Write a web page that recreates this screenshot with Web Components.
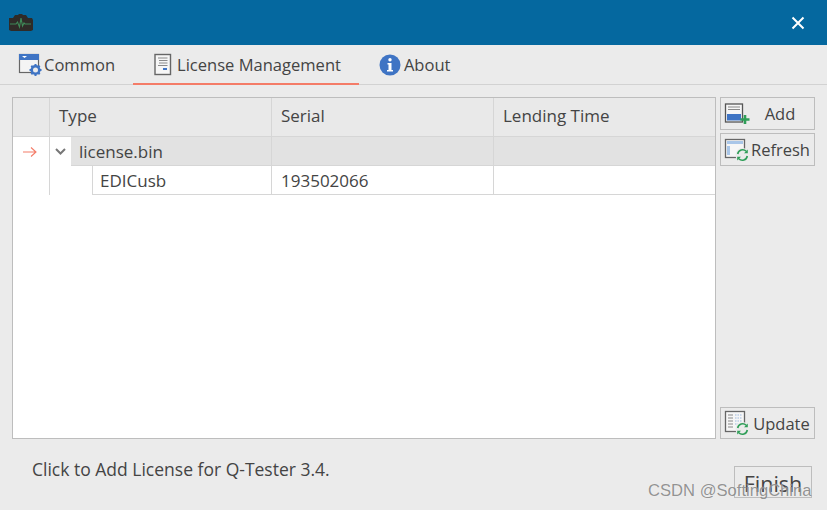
<!DOCTYPE html>
<html>
<head>
<meta charset="utf-8">
<style>
  html, body { margin: 0; height: 100%; }
  body { font-family: "Open Sans", "Noto Sans", sans-serif; color: #444; background: #ebebeb; overflow: hidden; }
</style>
</head>
<body>
<license-window>
  <title-bar slot="title"></title-bar>
  <tab-strip slot="tabs">
    <tab-item style="padding-left:18px">
      <svg slot="icon" width="26" height="24" viewBox="0 0 26 24">
        <rect x="1.500" y="1.500" width="19" height="18" fill="#f4f4f4" stroke="#666" stroke-width="1.200"/>
        <rect x="1" y="1" width="20" height="6" fill="#3f74c4"/>
        <path d="M4 3h5l-2.500 2z" fill="#fff"/>
        <circle cx="17.500" cy="17" r="3.800" fill="#ebebeb" stroke="#3f74c4" stroke-width="2.600"/>
        <path d="M17.500 11v2M17.500 21v2M11.500 17h2M21.500 17h2M13.300 12.800l1.400 1.400M20.300 19.800l1.400 1.400M21.700 12.800l-1.400 1.400M14.700 19.800l-1.400 1.400" stroke="#3f74c4" stroke-width="2"/>
      </svg>
      Common
    </tab-item>
    <tab-item active>
      <svg slot="icon" style="margin-right:4px" width="20" height="24" viewBox="0 0 20 24">
        <rect x="2" y="1.500" width="15.500" height="20" fill="#f6f6f6" stroke="#666" stroke-width="1.400"/>
        <path d="M5 5h9.500M6 7.500h8.500M6 10h8.500M5 12.500h9.500" stroke="#8a8a8a" stroke-width="1"/>
        <rect x="10" y="15" width="4" height="2" fill="#3f74c4"/>
      </svg>
      License Management
    </tab-item>
    <tab-item>
      <svg slot="icon" style="margin-right:3px" width="22" height="22" viewBox="0 0 22 22">
        <circle cx="11" cy="11" r="10.500" fill="#3f74c4"/>
        <circle cx="11" cy="5.800" r="1.700" fill="#fff"/>
        <path d="M8.500 9h4v7h1.500v1.500H8V16h1.500v-5.500h-1z" fill="#fff"/>
      </svg>
      About
    </tab-item>
  </tab-strip>
  <license-grid slot="grid"></license-grid>
  <side-button slot="side" label="Add" wide>
    <svg slot="icon" width="26" height="22" viewBox="0 0 26 22">
      <rect x="1.500" y="1" width="17" height="18" fill="#f6f6f6" stroke="#555" stroke-width="1.300"/>
      <path d="M4 4h12M4 6.500h12" stroke="#888"/>
      <rect x="3" y="11" width="14" height="6.500" fill="#3f74c4"/>
      <path d="M21 12v9M16.500 16.500h9" stroke="#2f9e58" stroke-width="2.600"/>
    </svg>
  </side-button>
  <side-button slot="side" label="Refresh">
    <svg slot="icon" width="26" height="24" viewBox="0 0 26 24">
      <rect x="1.500" y="1.500" width="19" height="18" fill="#f6f6f6" stroke="#666" stroke-width="1.300"/>
      <rect x="3" y="3" width="16" height="3" fill="#a9c6e8"/>
      <rect x="3" y="8" width="3" height="9" fill="#a9c6e8"/>
      <circle cx="18.500" cy="17" r="7" fill="#ebebeb"/>
      <path d="M13.700 16a5 5 0 0 1 8.500-2.700M23.300 18a5 5 0 0 1-8.500 2.700" fill="none" stroke="#2f9e58" stroke-width="1.600"/>
      <path d="M23.800 11.500v3.800H20zM13.200 22.500v-3.800H17z" fill="#2f9e58"/>
    </svg>
  </side-button>
  <side-button slot="update" label="Update" update>
    <svg slot="icon" width="26" height="26" viewBox="0 0 26 26">
      <rect x="1.500" y="1.500" width="19" height="20" fill="#f6f6f6" stroke="#666" stroke-width="1.300"/>
      <path d="M4 5h5M4 8h5M4 11h5M4 14h5M4 17h5" stroke="#888" stroke-width="1.200"/>
      <path d="M11 5h7M11 8h7M11 11h7M11 14h3" stroke="#9db9de" stroke-width="1.200" stroke-dasharray="1.500 1"/>
      <circle cx="18.500" cy="19" r="7" fill="#ebebeb"/>
      <path d="M13.700 18a5 5 0 0 1 8.500-2.700M23.300 20a5 5 0 0 1-8.500 2.700" fill="none" stroke="#2f9e58" stroke-width="1.600"/>
      <path d="M23.800 13.500v3.800H20zM13.200 24.500v-3.800H17z" fill="#2f9e58"/>
    </svg>
  </side-button>
  <span slot="hint">Click to Add License for Q-Tester 3.4.</span>
  <finish-button slot="finish">Finish</finish-button>
</license-window>

<script>
class LicenseWindow extends HTMLElement {
  constructor() {
    super();
    this.attachShadow({mode: 'open'}).innerHTML = `
      <style>
        :host { display: flex; flex-direction: column; width: 827px; height: 510px; position: relative; overflow: hidden; }
        .body { display: flex; gap: 4px; padding: 12px 12px 0 12px; height: 342px; }
        .grid { width: 704px; display: flex; }
        .side { width: 95px; display: flex; flex-direction: column; gap: 3px; }
        .side .update { margin-top: auto; display: flex; flex-direction: column; }
        .foot { display: flex; justify-content: space-between; padding: 18px 15px 0 32px; font-size: 17.500px; }
        .mark { position: absolute; left: 648px; top: 481px; font: 16.600px "Liberation Sans", sans-serif; color: rgba(120,120,120,.8); text-shadow: 0 0 1px rgba(255,255,255,.7); }
      </style>
      <slot name="title"></slot>
      <slot name="tabs"></slot>
      <div class="body">
        <div class="grid"><slot name="grid"></slot></div>
        <div class="side">
          <slot name="side"></slot>
          <div class="update"><slot name="update"></slot></div>
        </div>
      </div>
      <div class="foot">
        <div class="hint"><slot name="hint"></slot></div>
        <slot name="finish"></slot>
      </div>
      <div class="mark">CSDN @SoftingChina</div>`;
  }
}

class TitleBar extends HTMLElement {
  constructor() {
    super();
    this.attachShadow({mode: 'open'}).innerHTML = `
      <style>
        :host { display: flex; align-items: center; justify-content: space-between; height: 45px; background: #05689f; padding: 0 22px 0 8px; box-sizing: border-box; }
        svg { display: block; }
      </style>
      <svg width="25" height="22" viewBox="0 0 25 22">
        <path d="M1 6h4l2-3h3l1-1h3l1 1h3l2 3h4l1 2v10l-2 1H3l-2-1z" fill="#2f2b28"/>
        <path d="M2 12h6l1.500-2 2 5 1.500-9 1.500 8 1.500-3 1 1h6" fill="none" stroke="#3f8a58" stroke-width="1.100"/>
      </svg>
      <svg width="14" height="14" viewBox="0 0 14 14">
        <path d="M1.500 1.500l11 11M12.500 1.500l-11 11" stroke="#fff" stroke-width="2"/>
      </svg>`;
  }
}

class TabStrip extends HTMLElement {
  constructor() {
    super();
    this.attachShadow({mode: 'open'}).innerHTML = `
      <style>
        :host { display: flex; height: 40px; box-sizing: border-box; border-bottom: 1px solid #d2d2d2; }
      </style>
      <slot></slot>`;
  }
}

class TabItem extends HTMLElement {
  constructor() {
    super();
    this.attachShadow({mode: 'open'}).innerHTML = `
      <style>
        :host { display: flex; align-items: center; height: 39px; box-sizing: border-box; padding: 0 18px 0 20px; font-size: 16.550px; color: #444; white-space: nowrap; }
        :host([active]) { border-bottom: 2px solid #f47c68; height: 40px; padding-top: 1px; }
      </style>
      <slot name="icon"></slot><slot></slot>`;
  }
}

class LicenseGrid extends HTMLElement {
  constructor() {
    super();
    this.attachShadow({mode: 'open'}).innerHTML = `
      <style>
        :host { display: block; flex: 1; box-sizing: border-box; border: 1px solid #bdbdbd; background: #fff; font-size: 17px; color: #444; }
        .row { display: grid; grid-template-columns: 37px 222px 222px 1fr; box-sizing: border-box; }
        .cell { display: flex; align-items: center; box-sizing: border-box; border-right: 1px solid #d6d6d6; padding-left: 9px; white-space: nowrap; }
        .cell:last-child { border-right: 0; }
        .head { height: 39px; background: #e9e9e9; border-bottom: 1px solid #d6d6d6; }
        .head .cell { padding-bottom: 3px; }
        .parent, .child { height: 29px; }
        .parent .cell, .child .cell { border-bottom: 1px solid #d6d6d6; }
        .parent .band { background: #e2e2e2; }
        .parent .first { padding: 0; background: #fff; border-bottom: 0; }
        .parent .ind { border-bottom: 0; }
        .chev { width: 21px; height: 100%; display: flex; align-items: center; justify-content: center; box-sizing: border-box; }
        .name { flex: 1; height: 100%; display: flex; align-items: center; padding-left: 8px; box-sizing: border-box; background: #e2e2e2; border-bottom: 1px solid #d6d6d6; }
        .ind { padding: 0 4px 0 0; justify-content: center; }
        .child .ind, .child .first { border-bottom: 0; }
        .child .first { padding: 0; }
        .child .name { background: #fff; border-left: 1px solid #d6d6d6; margin-left: 42px; padding-left: 7px; }
      </style>
      <div class="row head">
        <div class="cell"></div>
        <div class="cell">Type</div>
        <div class="cell">Serial</div>
        <div class="cell">Lending Time</div>
      </div>
      <div class="row parent">
        <div class="cell ind">
          <svg width="15" height="12" viewBox="0 0 15 12"><path d="M1 6h13M9 1.500L14 6l-5 4.500" fill="none" stroke="#f47c68" stroke-width="1.100"/></svg>
        </div>
        <div class="cell first">
          <div class="chev"><svg width="11" height="7" viewBox="0 0 11 7"><path d="M1 1l4.500 4.500L10 1" fill="none" stroke="#777" stroke-width="2"/></svg></div>
          <div class="name">license.bin</div>
        </div>
        <div class="cell band"></div>
        <div class="cell band"></div>
      </div>
      <div class="row child">
        <div class="cell ind"></div>
        <div class="cell first"><div class="name">EDICusb</div></div>
        <div class="cell">193502066</div>
        <div class="cell"></div>
      </div>`;
  }
}

class SideButton extends HTMLElement {
  constructor() {
    super();
    this.attachShadow({mode: 'open'}).innerHTML = `
      <style>
        :host { display: flex; align-items: center; height: 33px; box-sizing: border-box; border: 1px solid #bdbdbd; padding-left: 3px; font-size: 16.500px; color: #444; white-space: nowrap; }
        ::slotted(svg) { display: block; flex: none; }
        .label { flex: 1; text-align: center; padding-right: 3px; }
        :host([wide]) .label { padding-right: 4px; }
        :host([update]) { height: 32px; }
        :host([update]) .label { padding-right: 1px; }
      </style>
      <slot name="icon"></slot><span class="label"></span>`;
    this.shadowRoot.querySelector('.label').textContent = this.getAttribute('label');
  }
}

class FinishButton extends HTMLElement {
  constructor() {
    super();
    this.attachShadow({mode: 'open'}).innerHTML = `
      <style>
        :host { display: flex; align-items: center; justify-content: center; width: 78px; height: 32px; box-sizing: border-box; border: 1px solid #bdbdbd; font-size: 21.500px; color: #444; margin-top: 9px; padding-top: 2px; }
      </style>
      <slot></slot>`;
  }
}

customElements.define('license-window', LicenseWindow);
customElements.define('title-bar', TitleBar);
customElements.define('tab-strip', TabStrip);
customElements.define('tab-item', TabItem);
customElements.define('license-grid', LicenseGrid);
customElements.define('side-button', SideButton);
customElements.define('finish-button', FinishButton);
</script>
</body>
</html>
